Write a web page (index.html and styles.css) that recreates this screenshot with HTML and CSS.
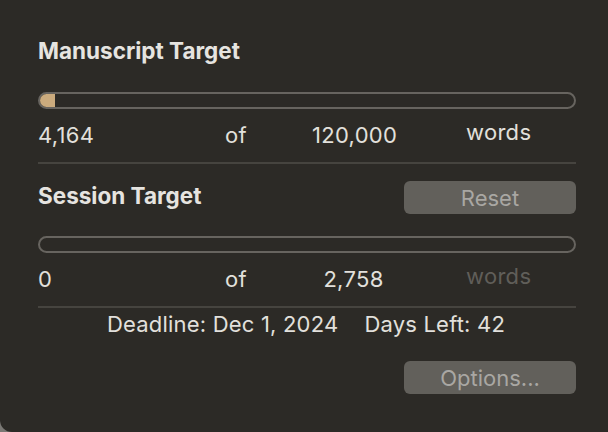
FILE: index.html
```html
<!DOCTYPE html>
<html>
<head>
<meta charset="utf-8">
<link rel="stylesheet" href="styles.css">
</head>
<body>
<div class="window">
  <section class="target">
    <h2 class="title">Manuscript Target</h2>
    <div class="bar"><div class="fill" style="width:17px"></div></div>
    <div class="counts">
      <span class="c1">4,164</span>
      <span class="c2">of</span>
      <span class="c3">120,000</span>
      <span class="c4">words</span>
    </div>
  </section>
  <hr class="divider">
  <section class="target session">
    <div class="head">
      <h2 class="title">Session Target</h2>
      <button class="btn">Reset</button>
    </div>
    <div class="bar"></div>
    <div class="counts">
      <span class="c1">0</span>
      <span class="c2">of</span>
      <span class="c3">2,758</span>
      <span class="c4 dim">words</span>
    </div>
  </section>
  <hr class="divider">
  <div class="deadline">
    <span>Deadline: Dec 1, 2024</span>
    <span>Days Left: 42</span>
  </div>
  <div class="footer">
    <button class="btn">Options...</button>
  </div>
</div>
</body>
</html>
```
FILE: styles.css
```css
html {
  background: #7a7874;
}
body {
  margin: 0;
  width: 608px;
  height: 432px;
  overflow: hidden;
}
.window {
  box-sizing: border-box;
  width: 608px;
  height: 432px;
  background: #2c2a26;
  border-bottom-left-radius: 12px;
  padding: 36px 32px 0 38px;
  font-family: Inter, "Noto Sans", sans-serif;
  color: #e2e0dc;
}
.title {
  margin: 0;
  font-size: 22.5px;
  font-weight: 700;
  line-height: 30px;
  color: #e6e4e0;
}
.target .title {
  margin-bottom: 26px;
}
.bar {
  position: relative;
  box-sizing: border-box;
  height: 17px;
  border: 2px solid #67645f;
  border-radius: 9px;
  overflow: hidden;
}
.fill {
  position: absolute;
  left: -2px;
  top: -2px;
  bottom: -2px;
  background: #cbab7d;
}
.counts {
  display: grid;
  grid-template-columns: 187px 87px 83px 1fr;
  font-size: 22px;
  line-height: 26px;
  margin-top: 13px;
  letter-spacing: 0.3px;
}
.c3 {
  text-align: center;
}
.c4 {
  padding-left: 71px;
  margin-top: -3px;
}
.dim {
  color: #605e59;
}
.divider {
  border: 0;
  height: 2px;
  background: #46443f;
  margin: 14px 0 0 0;
}
.session .head {
  display: flex;
  justify-content: space-between;
  align-items: center;
  margin-top: 17px;
  margin-bottom: 22px;
}
.session .head .title {
  margin: 0;
  margin-top: -4px;
}
.btn {
  width: 172px;
  height: 33px;
  border: 0;
  border-radius: 6px;
  background: #62605b;
  color: #a9a7a3;
  font-family: Inter, "Noto Sans", sans-serif;
  font-size: 22px;
  padding: 0;
}
.deadline {
  display: flex;
  justify-content: center;
  gap: 26px;
  font-size: 22px;
  line-height: 26px;
  margin-top: 3px;
  padding-right: 2px;
  letter-spacing: 0.2px;
}
.footer {
  display: flex;
  justify-content: flex-end;
  margin-top: 24px;
}
```
